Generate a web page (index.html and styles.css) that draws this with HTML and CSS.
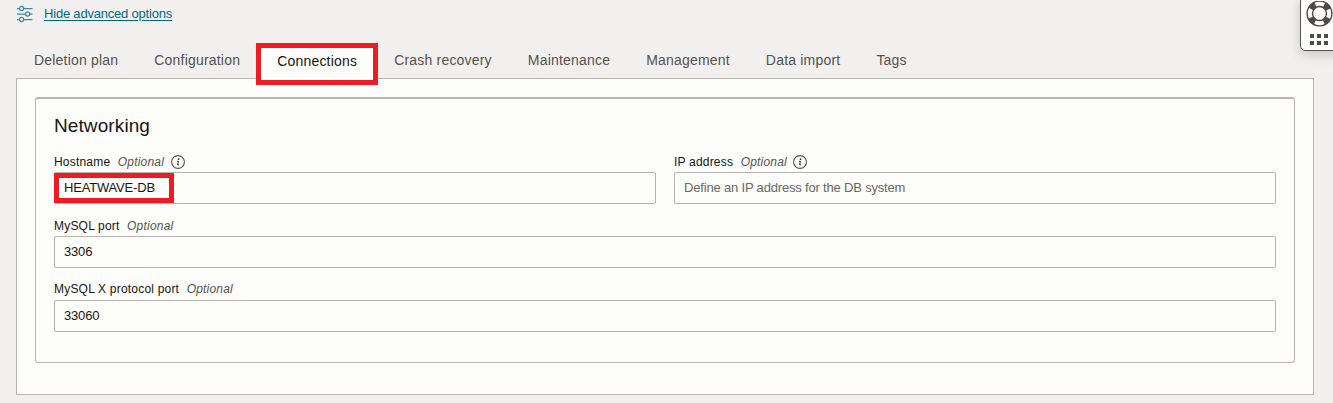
FILE: index.html
```html
<!DOCTYPE html>
<html lang="en">
<head>
<meta charset="utf-8">
<title>Advanced options</title>
<link rel="stylesheet" href="styles.css">
</head>
<body>
<main class="page">
  <div class="toggle">
    <svg class="toggle-icon" width="18" height="18" viewBox="0 0 18 18" fill="none" stroke="#3f88a3" stroke-width="1.25">
      <path d="M1 3.5H3.2M8 3.5H16.5M1 9H9.2M14 9H16.5M1 14.5H3.2M8 14.5H16.5"/>
      <circle cx="5.6" cy="3.5" r="2.1"/><circle cx="11.6" cy="9" r="2.1"/><circle cx="5.6" cy="14.5" r="2.1"/>
    </svg>
    <a class="toggle-link" href="#">Hide advanced options</a>
  </div>
  <nav class="tabs">
    <span class="tab">Deletion plan</span>
    <span class="tab">Configuration</span>
    <span class="tab tab-active">Connections</span>
    <span class="tab">Crash recovery</span>
    <span class="tab">Maintenance</span>
    <span class="tab">Management</span>
    <span class="tab">Data import</span>
    <span class="tab">Tags</span>
  </nav>
  <section class="panel">
    <div class="card">
      <h2 class="card-title">Networking</h2>
      <div class="fields">
        <div class="field">
          <div class="label">Hostname <em class="optional">Optional</em>
            <svg class="info" width="14" height="14" viewBox="0 0 14 14"><circle cx="7" cy="7" r="6.4" fill="none" stroke="#555250" stroke-width="1.1"/><circle cx="7.6" cy="4.2" r=".85" fill="#312d2a"/><path d="M5.9 6.3H7.4L6.6 9.9H8.1" fill="none" stroke="#312d2a" stroke-width="1"/></svg>
          </div>
          <div class="input"><span class="value-mark">HEATWAVE-DB</span></div>
        </div>
        <div class="field">
          <div class="label">IP address <em class="optional">Optional</em>
            <svg class="info" width="14" height="14" viewBox="0 0 14 14"><circle cx="7" cy="7" r="6.4" fill="none" stroke="#555250" stroke-width="1.1"/><circle cx="7.6" cy="4.2" r=".85" fill="#312d2a"/><path d="M5.9 6.3H7.4L6.6 9.9H8.1" fill="none" stroke="#312d2a" stroke-width="1"/></svg>
          </div>
          <div class="input placeholder">Define an IP address for the DB system</div>
        </div>
        <div class="field field-wide">
          <div class="label">MySQL port <em class="optional">Optional</em></div>
          <div class="input">3306</div>
        </div>
        <div class="field field-wide">
          <div class="label label-raised">MySQL X protocol port <em class="optional">Optional</em></div>
          <div class="input">33060</div>
        </div>
      </div>
    </div>
  </section>
  <aside class="help">
    <svg width="32" height="51" viewBox="0 0 32 51">
      <g fill="none" stroke="#4e4a47">
        <circle cx="18.5" cy="12.5" r="9.7" stroke-width="6.2" stroke-dasharray="6.2 9.037" stroke-dashoffset="-4.52"/>
        <circle cx="18.5" cy="12.5" r="12.4" stroke-width="1.4"/>
        <circle cx="18.5" cy="12.5" r="7" stroke-width="1.4"/>
      </g>
      <path fill="#4e4a47" d="M9 33h4v4H9zM16 33h4v4h-4zM23 33h4v4h-4zM9 40h4v4H9zM16 40h4v4h-4zM23 40h4v4h-4z"/>
    </svg>
  </aside>
</main>
</body>
</html>
```
FILE: styles.css
```css
* { box-sizing: border-box; }
body {
  margin: 0;
  background: #f2f0ef;
  color: #161513;
  font-family: "Liberation Sans", Arial, sans-serif;
}
.page {
  position: relative;
  height: 403px;
  padding: 0 19px 0 16px;
  overflow: hidden;
}
.toggle {
  display: flex;
  align-items: center;
  gap: 10px;
  height: 27px;
}
.toggle-link {
  color: #00688c;
  font-size: 13px;
  letter-spacing: -.2px;
  text-underline-offset: 2px;
}
.tabs {
  display: flex;
  height: 51px;
  padding-top: 16px;
}
.tab {
  height: 35px;
  padding: 0 18px;
  color: #55514e;
  font-size: 14px;
  line-height: 34px;
  letter-spacing: .197px;
  white-space: nowrap;
}
.tab-active {
  position: relative;
  z-index: 1;
  height: 42px;
  margin-left: -2px;
  margin-right: -2px;
  padding: 0 16px;
  border: 5px solid #ed1c24;
  background: #fdfdfb;
  color: #161513;
  line-height: 26px;
}
.panel {
  height: 317px;
  padding: 18px;
  border: 1px solid #bcb6b1;
  background: #fdfdfb;
}
.card {
  height: 266px;
  padding: 15px 18px;
  border: 1px solid #bcb6b1;
  border-top-width: 2px;
  border-radius: 3px;
}
.card-title {
  margin: 0;
  font-size: 19px;
  font-weight: 400;
  line-height: 24px;
  letter-spacing: .1px;
}
.fields {
  display: grid;
  grid-template-columns: 1fr 1fr;
  column-gap: 18px;
  padding-top: 14px;
}
.field {
  height: 64px;
}
.field-wide {
  grid-column: 1 / -1;
}
.label {
  display: flex;
  align-items: center;
  gap: 7.5px;
  height: 20px;
  padding-bottom: 1px;
  font-size: 12px;
  letter-spacing: .2px;
}
.label-raised {
  padding-bottom: 2px;
}
.optional {
  color: #55514e;
}
.info {
  margin-left: -1px;
}
.input {
  height: 32px;
  padding: 0 9px;
  border: 1px solid #b8b3ae;
  border-radius: 2px;
  font-size: 13px;
  line-height: 29px;
  letter-spacing: -.18px;
}
.placeholder {
  color: #6b6764;
}
.value-mark {
  display: block;
  width: 120px;
  height: 30px;
  margin-left: -10px;
  padding-left: 5px;
  border: 5px solid #ed1c24;
  line-height: 19px;
}
.help {
  position: absolute;
  top: -4px;
  left: 1300px;
  width: 44px;
  height: 55px;
  padding-top: 4px;
  border: 1px solid #55514e;
  border-radius: 5px;
  background: #fdfdfb;
  box-shadow: 0 4px 12px rgba(0, 0, 0, .16);
}
.help svg {
  display: block;
}
```
